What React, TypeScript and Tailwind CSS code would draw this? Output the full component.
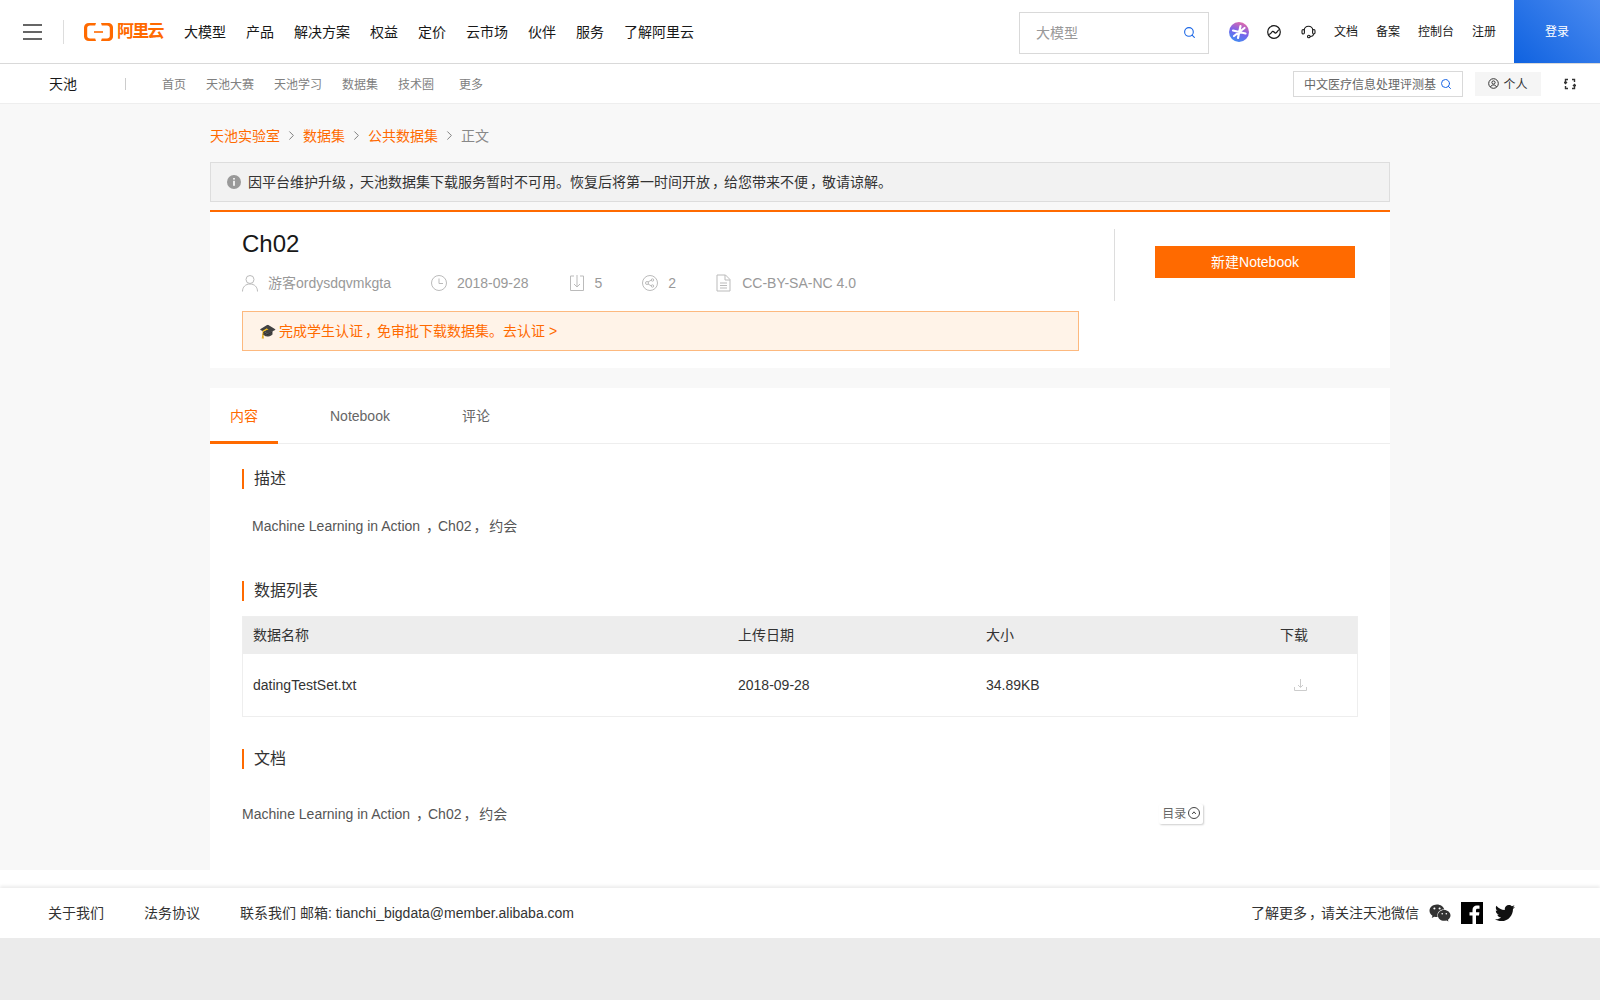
import { Search, ChevronRight } from "lucide-react";
import { FaWeixin, FaTwitter } from "react-icons/fa";

const font = '"Liberation Sans","Noto Sans CJK SC",sans-serif';

const Comma = () => <span className="inline-block pl-[0.15em] tracking-[-0.15em]">，</span>;

const Heading = ({ children }: { children: string }) => (
  <div className="flex h-5 items-center border-l-2 border-[#ff6a00] pl-[10px] text-base leading-5 text-[#333]">{children}</div>
);

const Crumb = ({ children }: { children: string }) => (
  <>
    <span className="text-[#ff6a00]">{children}</span>
    <ChevronRight className="mx-1 h-[15px] w-[15px] text-[#777]" strokeWidth={1.5} />
  </>
);

const Logo = () => (
  <div className="flex items-center gap-[4px]">
    <svg width="29" height="18" viewBox="0 0 29 18" fill="#ff6a00">
      <path d="M5 0h7l-.8 2.600H6C4.400 2.600 3.200 3.600 3.200 5v8c0 1.400 1.200 2.400 2.800 2.400h5.200L12 18H5c-3 0-5-2-5-4.500v-9C0 2 2 0 5 0z" />
      <path d="M24 0h-7l.8 2.600H23c1.600 0 2.800 1 2.800 2.400v8c0 1.400-1.200 2.400-2.800 2.400h-5.200L17 18h7c3 0 5-2 5-4.500v-9C29 2 27 0 24 0z" />
      <rect x="10" y="8.200" width="9" height="1.600" />
    </svg>
    <span className="w-[46px] whitespace-nowrap text-[17px] font-bold leading-none tracking-[-1.7px] text-[#ff6a00]">阿里云</span>
  </div>
);

export default function App() {
  return (
    <div className="flex min-h-[1000px] flex-col bg-[#f8f8f8]" style={{ fontFamily: font }}>
      <header className="flex h-[64px] items-center border-b border-[#d9d9d9] bg-white">
        <div className="ml-[23px] flex w-[19px] flex-col gap-[5px]">
          <span className="h-[2px] bg-[#666]" />
          <span className="h-[2px] bg-[#666]" />
          <span className="h-[2px] bg-[#666]" />
        </div>
        <div className="ml-[21px] h-6 w-px bg-[#ddd]" />
        <div className="ml-[20px]"><Logo /></div>
        <nav className="ml-[21px] flex gap-5 text-sm text-[#181818]">
          {["大模型", "产品", "解决方案", "权益", "定价", "云市场", "伙伴", "服务", "了解阿里云"].map((t) => (
            <span key={t}>{t}</span>
          ))}
        </nav>
        <div className="ml-auto mt-[2px] flex h-[42px] w-[190px] items-center justify-between border border-[#d9d9d9] pl-4 pr-3 text-sm text-[#999]">
          <span>大模型</span>
          <Search className="h-[13px] w-[13px] text-[#1a66e6]" strokeWidth={2} />
        </div>
        <svg className="ml-5" width="20" height="20" viewBox="0 0 20 20">
          <defs>
            <linearGradient id="star" x1="0.7" y1="0" x2="0.3" y2="1">
              <stop offset="0" stopColor="#e56aa8" />
              <stop offset="0.5" stopColor="#7a62ea" />
              <stop offset="1" stopColor="#3f8df2" />
            </linearGradient>
          </defs>
          <circle cx="10" cy="10" r="10" fill="url(#star)" />
          <path d="M11.500 4L9 16M4 8.500l12.500 3M15.500 6L5 14" stroke="#fff" strokeWidth="2.200" strokeLinecap="round" fill="none" />
        </svg>
        <svg className="ml-[18px]" width="14" height="14" viewBox="0 0 14 14" fill="none" stroke="#181818" strokeWidth="1.200">
          <circle cx="7" cy="7" r="6.300" />
          <path d="M1.500 9.500C3 9.500 3.800 8.500 4.500 7.500S6 5.800 7 7s1.500 1.500 2.500.5S11 5 12.500 4.500" />
        </svg>
        <svg className="ml-5" width="15" height="15" viewBox="0 0 15 15" fill="none" stroke="#181818" strokeWidth="1.100">
          <path d="M3.200 6.500a4.300 4.300 0 0 1 8.600 0" />
          <rect x="1" y="5.500" width="2.400" height="4.500" rx="1.200" />
          <rect x="11.600" y="5.500" width="2.400" height="4.500" rx="1.200" />
          <path d="M12.500 10c0 1.500-1.500 2.500-3.500 2.500" />
          <circle cx="7.800" cy="12.500" r="1.300" />
        </svg>
        <div className="ml-[18px] flex gap-[18px] text-xs text-[#181818]">
          <span>文档</span>
          <span>备案</span>
          <span>控制台</span>
          <span>注册</span>
        </div>
        <div className="ml-[18px] flex h-[63px] w-[86px] items-center justify-center bg-[linear-gradient(45deg,#0f62e0,#4a8af0)] text-xs text-white">登录</div>
      </header>

      <div className="flex h-[40px] items-center border-b border-[#eee] bg-white">
        <span className="ml-[49px] text-sm text-[#181818]">天池</span>
        <div className="ml-[48px] h-3 w-px bg-[#ccc]" />
        <div className="ml-9 mt-[2px] flex text-xs text-[#808080]">
          <span>首页</span>
          <span className="ml-5">天池大赛</span>
          <span className="ml-5">天池学习</span>
          <span className="ml-5">数据集</span>
          <span className="ml-5">技术圈</span>
          <span className="ml-[25px]">更多</span>
        </div>
        <div className="ml-auto flex h-[26px] w-[170px] items-center justify-between border border-[#d9d9d9] pl-[10px] pr-[10px] text-xs text-[#666]">
          <span className="mt-[2px] whitespace-nowrap">中文医疗信息处理评测基</span>
          <Search className="h-3 w-3 text-[#1a66e6]" strokeWidth={2} />
        </div>
        <div className="ml-3 flex h-6 w-[66px] items-center justify-center gap-1 bg-[#f5f5f5] text-xs text-[#333]">
          <svg width="11" height="11" viewBox="0 0 11 11" fill="none" stroke="#333">
            <circle cx="5.500" cy="5.500" r="4.800" />
            <circle cx="5.500" cy="4.500" r="1.600" />
            <path d="M2.500 9c.6-1.500 1.700-2 3-2s2.400.5 3 2" />
          </svg>
          <span className="mt-[2px]">个人</span>
        </div>
        <svg className="ml-[23px] mr-[24px]" width="12" height="12" viewBox="0 0 12 12" fill="none" stroke="#333" strokeWidth="1.400">
          <path d="M4 1.500H1.500V5M8 1.500h2.500V4M4 10.500H1.500V8M8 10.500h2.500V7M0 4l1.500 1.500L3 4M9 8l1.500-1.500L12 8" />
        </svg>
      </div>

      <main className="mx-auto w-[1180px]">
        <div className="flex h-[58px] items-center pt-[5px] text-sm">
          <Crumb>天池实验室</Crumb>
          <Crumb>数据集</Crumb>
          <Crumb>公共数据集</Crumb>
          <span className="text-[#888]">正文</span>
        </div>
        <div className="flex h-10 items-center border border-[#ddd] bg-[#f2f2f2] pl-4 text-sm text-[#333]">
          <svg className="mr-[7px]" width="14" height="14" viewBox="0 0 14 14">
            <circle cx="7" cy="7" r="7" fill="#999" />
            <rect x="6.200" y="3" width="1.600" height="1.600" fill="#fff" />
            <rect x="6.200" y="5.800" width="1.600" height="5" fill="#fff" />
          </svg>
          <span>
            因平台维护升级<Comma />天池数据集下载服务暂时不可用。恢复后将第一时间开放<Comma />给您带来不便<Comma />敬请谅解。
          </span>
        </div>

        <section className="mt-2 flex h-[158px] border-t-2 border-[#ff6a00] bg-white">
          <div className="ml-8 w-[837px]">
            <h1 className="mt-[18px] text-2xl font-normal leading-7 text-[#181818]">Ch02</h1>
            <div className="mt-[13px] flex h-6 items-center text-sm text-[#999]">
              <svg width="16" height="18" viewBox="0 0 16 18" fill="none" stroke="#bbb">
                <circle cx="8" cy="5.500" r="4" />
                <path d="M.5 17.500c0-4.500 3-7.500 7.500-7.500s7.500 3 7.500 7.500" />
              </svg>
              <span className="ml-[10px]">游客ordysdqvmkgta</span>
              <svg className="ml-10" width="16" height="16" viewBox="0 0 16 16" fill="none" stroke="#bbb">
                <circle cx="8" cy="8" r="7.500" />
                <path d="M8 3.500V8.500H12" />
              </svg>
              <span className="ml-[10px]">2018-09-28</span>
              <svg className="ml-10" width="16" height="18" viewBox="0 0 16 18" fill="none" stroke="#bbb">
                <path d="M5 2H1.500v14.500h13V2H11M8 1v12M5 10l3 3 3-3" />
              </svg>
              <span className="ml-[10px]">5</span>
              <svg className="ml-10" width="16" height="16" viewBox="0 0 16 16" fill="none" stroke="#bbb">
                <circle cx="8" cy="8" r="7.500" />
                <circle cx="5" cy="8" r="1.500" />
                <circle cx="10.500" cy="5" r="1.200" />
                <circle cx="10.500" cy="11" r="1.200" />
                <path d="M6 7l3.500-2M6 9l3.500 2" />
              </svg>
              <span className="ml-[10px]">2</span>
              <svg className="ml-10" width="15" height="18" viewBox="0 0 15 18" fill="none" stroke="#bbb">
                <path d="M1 1h8.500L14 5.500V17H1zM9 1v5h5M4 9h7M4 11.500h7M4 14h7" />
              </svg>
              <span className="ml-[11px]">CC-BY-SA-NC 4.0</span>
            </div>
            <div className="mt-4 flex h-10 items-center border border-[#fdb97f] bg-[#fff3e8] pl-4 text-sm text-[#ff6a00]">
              <span className="mr-[3px] text-[#333]">🎓</span>
              <span>完成学生认证<Comma />免审批下载数据集。去认证 &gt;</span>
            </div>
          </div>
          <div className="ml-[35px] mt-[17px] h-[72px] w-px bg-[#ddd]" />
          <button className="ml-10 mt-[34px] h-8 w-[200px] bg-[#ff6a00] text-sm text-white">新建Notebook</button>
        </section>

        <section className="mt-5 h-[482px] bg-white">
          <div className="flex h-[56px] border-b border-[#eee] text-sm text-[#666]">
            <div className="flex h-[56px] w-[68px] items-center justify-center border-b-[3px] border-[#ff6a00] pt-[2px] text-[#ff6a00]">内容</div>
            <div className="ml-[52px] flex items-center">Notebook</div>
            <div className="ml-[72px] flex items-center">评论</div>
          </div>
          <div className="px-8 pt-[25px]">
            <Heading>描述</Heading>
            <p className="mt-[27px] pl-[10px] text-sm leading-5 text-[#555]">Machine Learning in Action <Comma />Ch02<Comma /> 约会</p>
            <div className="mt-[45px]"><Heading>数据列表</Heading></div>
            <div className="mt-[15px] border border-[#eee] text-sm text-[#333]">
              <div className="grid h-[37px] grid-cols-[485px_248px_294px_1fr] items-center bg-[#ededed] pb-[2px] pl-[10px] text-[#333]">
                <span>数据名称</span>
                <span>上传日期</span>
                <span>大小</span>
                <span>下载</span>
              </div>
              <div className="grid h-[62px] grid-cols-[485px_248px_294px_1fr] items-center pl-[10px]">
                <span>datingTestSet.txt</span>
                <span>2018-09-28</span>
                <span>34.89KB</span>
                <svg className="ml-[14px]" width="13" height="12" viewBox="0 0 13 12" fill="none" stroke="#ccc">
                  <path d="M6.500 0v8M4 6l2.500 2.500L9 6M.5 8v3.500h12V8" />
                </svg>
              </div>
            </div>
            <div className="mt-8"><Heading>文档</Heading></div>
            <div className="mt-[35px] flex h-5 items-center text-sm leading-5 text-[#555]">
              <span>Machine Learning in Action <Comma />Ch02<Comma /> 约会</span>
              <div className="ml-[652px] flex h-5 w-[44px] items-center rounded-[2px] pl-[3px] text-xs text-[#666] shadow-[1px_1px_2px_rgba(0,0,0,0.2)]">
                目录
                <svg className="mb-[2px] ml-[2px]" width="12" height="12" viewBox="0 0 12 12" fill="none" stroke="#444">
                  <circle cx="6" cy="6" r="5.500" />
                  <path d="M4.200 7L6 4.800 7.800 7" />
                </svg>
              </div>
            </div>
          </div>
        </section>
      </main>

      <div className="h-[18px] bg-white" />
      <footer className="flex h-[50px] items-center bg-white pl-12 pr-[85px] text-sm text-[#333] shadow-[0_-2px_3px_rgba(0,0,0,0.08)]">
        <span>关于我们</span>
        <span className="ml-10">法务协议</span>
        <span className="ml-10">联系我们 邮箱: tianchi_bigdata@member.alibaba.com</span>
        <span className="ml-auto">了解更多<Comma />请关注天池微信</span>
        <FaWeixin className="ml-[10px] h-[22px] w-[22px] text-[#333]" />
        <svg className="ml-[10px]" width="22" height="22" viewBox="0 0 22 22">
          <rect width="22" height="22" fill="#000" />
          <path d="M15 22v-8.500h3l.4-3.300H15V8.300c0-1 .3-1.600 1.700-1.600h1.800V3.700c-.3 0-1.400-.1-2.600-.1-2.600 0-4.400 1.600-4.400 4.400v2.200H8.500v3.300h3V22z" fill="#fff" />
        </svg>
        <FaTwitter className="ml-3 h-[20px] w-[20px] text-[#111]" />
      </footer>
      <div className="h-[62px] bg-[#ebebeb]" />
    </div>
  );
}
